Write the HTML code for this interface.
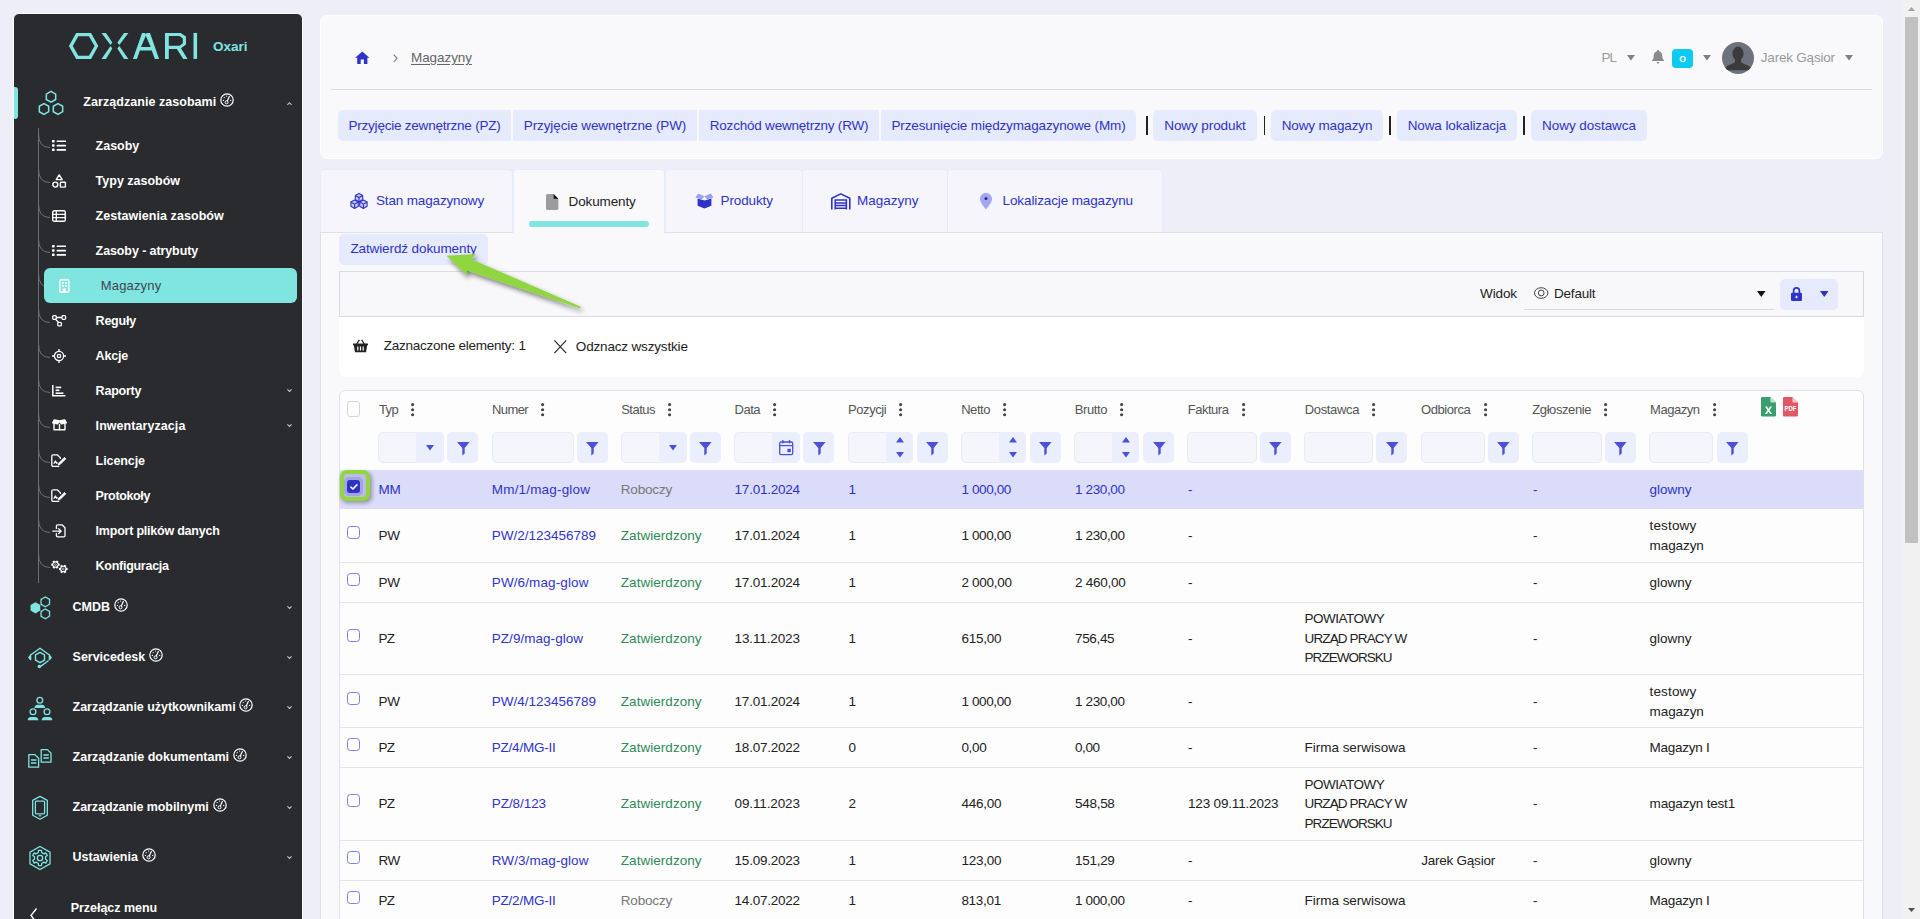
<!DOCTYPE html>
<html><head><meta charset="utf-8"><title>Magazyny</title>
<style>
html,body{margin:0;padding:0}
body{width:1920px;height:919px;overflow:hidden;position:relative;background:#eeeef8;font-family:"Liberation Sans",sans-serif;}
body div,body span,body svg{position:absolute;box-sizing:border-box;white-space:nowrap}
svg{overflow:visible}
</style></head><body>
<div style="left:13px;top:13px;width:290px;height:920px;background:#2a2b2e;border:1px solid #fff;border-radius:6px 6px 0 0;"></div>
<svg style="left:0;top:0" width="310" height="70" viewBox="0 0 310 70"><g fill="#80e5e0" fill-rule="evenodd"><path d="M68.9 46 L76.15 32.9 H91.05 L98.3 46 L91.05 59 H76.15 Z M72.8 46 L78.3 55.85 H88.9 L94.6 46 L88.9 36.2 H78.3 Z"/><path d="M101.5 32.9 H106 L112.3 42.5 L110.5 45.1 Z"/><path d="M101.5 59 H106 L112.3 48.4 L110.5 46 Z"/><path d="M128.4 32.9 H124 L117.4 42.5 L119.3 45.1 Z"/><path d="M128.4 59 H124 L117.4 48.4 L119.3 46 Z"/><path d="M142.05 32.95 H145 L145.8 34.3 L146.6 32.95 H150 L159.1 58.9 H154.9 L151.75 50.4 H139.9 L136.9 58.9 H132.95 Z M145.8 35.8 L150.7 47 H141 Z"/><path d="M165 32.95 H180.65 L186 36.5 V44.4 L181 48.2 L187.6 58.9 H183.2 L176.9 49 H168.8 V58.9 H165 Z M168.8 36.1 V45.8 H179.5 L182.8 43.2 V38.5 L179.5 36.1 Z"/><rect x="193.5" y="32.95" width="3.6" height="25.95"/></g></svg>
<span style="left:213px;top:38.7px;font-size:13.5px;line-height:16px;font-weight:700;color:#80e5e0;letter-spacing:-0.024px;">Oxari</span>
<div style="left:14px;top:87px;width:4px;height:32px;background:#80e5e0;border-radius:0 3px 3px 0;"></div>
<svg style="left:0px;top:0px;" width="80" height="130" viewBox="0 0 80 130"><polygon points="55.68,99.50 51.00,102.20 46.32,99.50 46.32,94.10 51.00,91.40 55.68,94.10" fill="none" stroke="#80e5e0" stroke-width="1.5"/><polygon points="48.68,111.70 44.00,114.40 39.32,111.70 39.32,106.30 44.00,103.60 48.68,106.30" fill="none" stroke="#80e5e0" stroke-width="1.5"/><polygon points="62.68,111.70 58.00,114.40 53.32,111.70 53.32,106.30 58.00,103.60 62.68,106.30" fill="none" stroke="#80e5e0" stroke-width="1.5"/></svg>
<span style="left:83.3px;top:94.0px;font-size:12.5px;line-height:16px;font-weight:700;color:#fff;letter-spacing:0.051px;">Zarządzanie zasobami</span>
<svg style="left:220px;top:93.3px;" width="14" height="14" viewBox="0 0 14 14"><circle cx="7" cy="7" r="6.2" fill="none" stroke="#fff" stroke-width="1.2"/><circle cx="6.6" cy="9.3" r="1.5" fill="none" stroke="#fff" stroke-width="1"/><path d="M7.3 8 L9.3 3.6" stroke="#fff" stroke-width="1.2" stroke-linecap="round"/><g fill="#fff"><circle cx="3.4" cy="7.4" r=".65"/><circle cx="4.2" cy="4.6" r=".65"/><circle cx="6.6" cy="3.1" r=".65"/><circle cx="10.7" cy="7.4" r=".65"/></g></svg>
<svg style="left:286.6px;top:101.8px;" width="5" height="3.2" viewBox="0 0 5 3.2"><path d="M.4 2.8 L2.5 .7 L4.6 2.8" fill="none" stroke="#c4c4c4" stroke-width="1.1"/></svg>
<div style="left:38px;top:128px;width:1px;height:455px;background:#6f6f72;"></div>
<svg style="left:38px;top:133.5px;" width="13" height="15" viewBox="0 0 13 15"><path d="M.5 0 Q.5 13.5 12 13.5" fill="none" stroke="#6f6f72" stroke-width="1"/></svg>
<span style="left:95.6px;top:138.3px;font-size:12.5px;line-height:16px;font-weight:700;color:#fff;letter-spacing:-0.010px;">Zasoby</span>
<svg style="left:52px;top:140.3px;" width="14" height="12" viewBox="0 0 14 12"><rect x="0" y="0" width="2.6" height="2.4" rx=".6" fill="#fff"/><rect x="4.6" y="0.4" width="9.4" height="1.7" rx=".5" fill="#fff"/><rect x="0" y="4.3" width="2.6" height="2.4" rx=".6" fill="#fff"/><rect x="4.6" y="4.7" width="9.4" height="1.7" rx=".5" fill="#fff"/><rect x="0" y="8.6" width="2.6" height="2.4" rx=".6" fill="#fff"/><rect x="4.6" y="9.0" width="9.4" height="1.7" rx=".5" fill="#fff"/></svg>
<svg style="left:38px;top:168.5px;" width="13" height="15" viewBox="0 0 13 15"><path d="M.5 0 Q.5 13.5 12 13.5" fill="none" stroke="#6f6f72" stroke-width="1"/></svg>
<span style="left:95.6px;top:173.3px;font-size:12.5px;line-height:16px;font-weight:700;color:#fff;letter-spacing:-0.000px;">Typy zasobów</span>
<svg style="left:52px;top:173.7px;" width="14" height="14" viewBox="0 0 14 14"><path d="M7.2 .9 L10.2 5.6 H4.2 Z" fill="none" stroke="#fff" stroke-width="1.4" stroke-linejoin="round"/><circle cx="3.3" cy="10.6" r="2.5" fill="none" stroke="#fff" stroke-width="1.4"/><rect x="8.4" y="8.2" width="5" height="4.9" rx=".6" fill="none" stroke="#fff" stroke-width="1.4"/></svg>
<svg style="left:38px;top:203.5px;" width="13" height="15" viewBox="0 0 13 15"><path d="M.5 0 Q.5 13.5 12 13.5" fill="none" stroke="#6f6f72" stroke-width="1"/></svg>
<span style="left:95.6px;top:208.3px;font-size:12.5px;line-height:16px;font-weight:700;color:#fff;letter-spacing:0.057px;">Zestawienia zasobów</span>
<svg style="left:52px;top:209.9px;" width="14" height="12" viewBox="0 0 14 12"><rect x=".7" y=".7" width="12.6" height="10.6" rx="1.6" fill="none" stroke="#fff" stroke-width="1.4"/><path d="M.7 4.3 H13.3 M.7 7.7 H13.3 M4.3 .7 V11.3" stroke="#fff" stroke-width="1.3" fill="none"/></svg>
<svg style="left:38px;top:238.5px;" width="13" height="15" viewBox="0 0 13 15"><path d="M.5 0 Q.5 13.5 12 13.5" fill="none" stroke="#6f6f72" stroke-width="1"/></svg>
<span style="left:95.6px;top:243.3px;font-size:12.5px;line-height:16px;font-weight:700;color:#fff;letter-spacing:-0.099px;">Zasoby - atrybuty</span>
<svg style="left:52px;top:245.3px;" width="14" height="12" viewBox="0 0 14 12"><rect x="0" y="0" width="2.6" height="2.4" rx=".6" fill="#fff"/><rect x="4.6" y="0.4" width="9.4" height="1.7" rx=".5" fill="#fff"/><rect x="0" y="4.3" width="2.6" height="2.4" rx=".6" fill="#fff"/><rect x="4.6" y="4.7" width="9.4" height="1.7" rx=".5" fill="#fff"/><rect x="0" y="8.6" width="2.6" height="2.4" rx=".6" fill="#fff"/><rect x="4.6" y="9.0" width="9.4" height="1.7" rx=".5" fill="#fff"/></svg>
<svg style="left:38px;top:273.5px;" width="13" height="15" viewBox="0 0 13 15"><path d="M.5 0 Q.5 13.5 12 13.5" fill="none" stroke="#6f6f72" stroke-width="1"/></svg>
<div style="left:44px;top:268px;width:253px;height:35px;background:#80e5e0;border-radius:6px;"></div>
<span style="left:100.8px;top:278.3px;font-size:13px;line-height:16px;color:#3f4652;letter-spacing:0.156px;">Magazyny</span>
<svg style="left:59.2px;top:278.5px;" width="11" height="14" viewBox="0 0 11 14"><rect x=".8" y=".8" width="9" height="12.4" rx="1.4" fill="none" stroke="#fff" stroke-width="1.5"/><g fill="#fff"><rect x="2.9" y="3" width="1.9" height="1.8"/><rect x="5.9" y="3" width="1.9" height="1.8"/><rect x="2.9" y="6" width="1.9" height="1.8"/><rect x="5.9" y="6" width="1.9" height="1.8"/><rect x="3.8" y="9.3" width="3" height="3.6"/></g></svg>
<svg style="left:38px;top:308.5px;" width="13" height="15" viewBox="0 0 13 15"><path d="M.5 0 Q.5 13.5 12 13.5" fill="none" stroke="#6f6f72" stroke-width="1"/></svg>
<span style="left:95.6px;top:313.3px;font-size:12.5px;line-height:16px;font-weight:700;color:#fff;letter-spacing:-0.229px;">Reguły</span>
<svg style="left:51.8px;top:314.5px;" width="15" height="12" viewBox="0 0 15 12"><g fill="none" stroke="#fff" stroke-width="1.3"><rect x=".7" y=".7" width="3.6" height="3.6" rx="1"/><rect x="10" y=".7" width="3.6" height="3.6" rx="1"/><rect x="5.8" y="7.3" width="3.6" height="3.6" rx="1"/><path d="M4.3 2.5 H10 M3.4 4 L6.6 7.6"/></g></svg>
<svg style="left:38px;top:343.5px;" width="13" height="15" viewBox="0 0 13 15"><path d="M.5 0 Q.5 13.5 12 13.5" fill="none" stroke="#6f6f72" stroke-width="1"/></svg>
<span style="left:95.6px;top:348.3px;font-size:12.5px;line-height:16px;font-weight:700;color:#fff;letter-spacing:-0.171px;">Akcje</span>
<svg style="left:52px;top:348.5px;" width="14" height="14" viewBox="0 0 14 14"><g fill="none" stroke="#fff" stroke-width="1.3"><circle cx="7" cy="7" r="4.6"/><circle cx="7" cy="7" r="1.7"/><path d="M7 0 V2.4 M7 11.6 V14 M0 7 H2.4 M11.6 7 H14"/></g></svg>
<svg style="left:38px;top:378.5px;" width="13" height="15" viewBox="0 0 13 15"><path d="M.5 0 Q.5 13.5 12 13.5" fill="none" stroke="#6f6f72" stroke-width="1"/></svg>
<span style="left:95.6px;top:383.3px;font-size:12.5px;line-height:16px;font-weight:700;color:#fff;letter-spacing:-0.218px;">Raporty</span>
<svg style="left:52.4px;top:384.5px;" width="14" height="12" viewBox="0 0 14 12"><path d="M.8 0 V10.8 H13.4" fill="none" stroke="#fff" stroke-width="1.5"/><g fill="#fff"><rect x="3.6" y="1.6" width="5.6" height="1.6"/><rect x="3.6" y="4.5" width="3.8" height="1.6"/><rect x="3.6" y="7.4" width="7.8" height="1.6"/></g></svg>
<svg style="left:286.6px;top:389.4px;" width="5" height="3.2" viewBox="0 0 5 3.2"><path d="M.4 .4 L2.5 2.5 L4.6 .4" fill="none" stroke="#c4c4c4" stroke-width="1.1"/></svg>
<svg style="left:38px;top:413.5px;" width="13" height="15" viewBox="0 0 13 15"><path d="M.5 0 Q.5 13.5 12 13.5" fill="none" stroke="#6f6f72" stroke-width="1"/></svg>
<span style="left:95.6px;top:418.3px;font-size:12.5px;line-height:16px;font-weight:700;color:#fff;letter-spacing:0.062px;">Inwentaryzacja</span>
<svg style="left:51.6px;top:419.3px;" width="15" height="12" viewBox="0 0 15 12"><g fill="none" stroke="#fff" stroke-width="1.4" stroke-linejoin="round"><path d="M2 4.6 V10.8 H13 V4.6"/><path d="M7.5 4.8 V10.8"/><path d="M.7 3.9 L2.3 .9 L7.5 1.9 L12.7 .9 L14.3 3.9 L9.6 4.9 L7.5 2.3 L5.4 4.9 Z" fill="#fff"/></g></svg>
<svg style="left:286.6px;top:424.4px;" width="5" height="3.2" viewBox="0 0 5 3.2"><path d="M.4 .4 L2.5 2.5 L4.6 .4" fill="none" stroke="#c4c4c4" stroke-width="1.1"/></svg>
<svg style="left:38px;top:448.5px;" width="13" height="15" viewBox="0 0 13 15"><path d="M.5 0 Q.5 13.5 12 13.5" fill="none" stroke="#6f6f72" stroke-width="1"/></svg>
<span style="left:95.6px;top:453.3px;font-size:12.5px;line-height:16px;font-weight:700;color:#fff;letter-spacing:-0.091px;">Licencje</span>
<svg style="left:51.4px;top:453.9px;" width="16" height="14" viewBox="0 0 16 14"><g fill="none" stroke="#fff" stroke-width="1.3" stroke-linejoin="round"><path d="M8.2 12.4 H2.2 Q.8 12.4 .8 11 V2.2 Q.8 .8 2.2 .8 H6.3 L9.4 3.9 V5"/><path d="M2.8 9.8 L4.4 7 L5.6 9.2 L6.6 8.4"/><path d="M13.4 3.4 L14.8 4.8 L9 10.6 L7.2 11 L7.6 9.2 Z" fill="#fff" stroke-width=".8"/></g></svg>
<svg style="left:38px;top:483.5px;" width="13" height="15" viewBox="0 0 13 15"><path d="M.5 0 Q.5 13.5 12 13.5" fill="none" stroke="#6f6f72" stroke-width="1"/></svg>
<span style="left:95.6px;top:488.3px;font-size:12.5px;line-height:16px;font-weight:700;color:#fff;letter-spacing:-0.350px;">Protokoły</span>
<svg style="left:51.4px;top:488.9px;" width="16" height="14" viewBox="0 0 16 14"><g fill="none" stroke="#fff" stroke-width="1.3" stroke-linejoin="round"><path d="M8.2 12.4 H2.2 Q.8 12.4 .8 11 V2.2 Q.8 .8 2.2 .8 H6.3 L9.4 3.9 V5"/><path d="M2.8 9.8 L4.4 7 L5.6 9.2 L6.6 8.4"/><path d="M13.4 3.4 L14.8 4.8 L9 10.6 L7.2 11 L7.6 9.2 Z" fill="#fff" stroke-width=".8"/></g></svg>
<svg style="left:38px;top:518.5px;" width="13" height="15" viewBox="0 0 13 15"><path d="M.5 0 Q.5 13.5 12 13.5" fill="none" stroke="#6f6f72" stroke-width="1"/></svg>
<span style="left:95.6px;top:523.3px;font-size:12.5px;line-height:16px;font-weight:700;color:#fff;letter-spacing:-0.224px;">Import plików danych</span>
<svg style="left:51.8px;top:523.9px;" width="14" height="14" viewBox="0 0 14 14"><g fill="none" stroke="#fff" stroke-width="1.3" stroke-linejoin="round" stroke-linecap="round"><path d="M4.4 4.6 V2.2 Q4.4 .8 5.8 .8 H10 L13 3.8 V11.4 Q13 12.8 11.6 12.8 H5.8 Q4.4 12.8 4.4 11.4 V9.6"/><path d="M.8 7.1 H9 M6.7 4.7 L9.2 7.1 L6.7 9.5"/></g></svg>
<svg style="left:38px;top:553.5px;" width="13" height="15" viewBox="0 0 13 15"><path d="M.5 0 Q.5 13.5 12 13.5" fill="none" stroke="#6f6f72" stroke-width="1"/></svg>
<span style="left:95.6px;top:558.3px;font-size:12.5px;line-height:16px;font-weight:700;color:#fff;letter-spacing:-0.275px;">Konfiguracja</span>
<svg style="left:50.6px;top:559.5px;" width="17" height="14" viewBox="0 0 17 14"><polygon points="7.59,3.44 8.79,3.64 8.79,5.56 7.59,5.76 7.05,6.69 7.48,7.84 5.82,8.80 5.04,7.86 3.96,7.86 3.18,8.80 1.52,7.84 1.95,6.69 1.41,5.76 0.21,5.56 0.21,3.64 1.41,3.44 1.95,2.51 1.52,1.36 3.18,0.40 3.96,1.34 5.04,1.34 5.82,0.40 7.48,1.36 7.05,2.51" fill="#fff"/><circle cx="4.5" cy="4.6" r="2.15" fill="#2a2b2e"/><circle cx="4.5" cy="4.6" r=".9" fill="none" stroke="#fff" stroke-width=".6"/><polygon points="15.39,7.84 16.59,8.04 16.59,9.96 15.39,10.16 14.85,11.09 15.28,12.24 13.62,13.20 12.84,12.26 11.76,12.26 10.98,13.20 9.32,12.24 9.75,11.09 9.21,10.16 8.01,9.96 8.01,8.04 9.21,7.84 9.75,6.91 9.32,5.76 10.98,4.80 11.76,5.74 12.84,5.74 13.62,4.80 15.28,5.76 14.85,6.91" fill="#fff"/><circle cx="12.3" cy="9.0" r="2.15" fill="#2a2b2e"/><circle cx="12.3" cy="9.0" r=".9" fill="none" stroke="#fff" stroke-width=".6"/></svg>
<span style="left:72.6px;top:598.8px;font-size:12.5px;line-height:16px;font-weight:700;color:#fff;letter-spacing:-0.049px;">CMDB</span>
<svg style="left:113.7px;top:598.0999999999999px;" width="14" height="14" viewBox="0 0 14 14"><circle cx="7" cy="7" r="6.2" fill="none" stroke="#fff" stroke-width="1.2"/><circle cx="6.6" cy="9.3" r="1.5" fill="none" stroke="#fff" stroke-width="1"/><path d="M7.3 8 L9.3 3.6" stroke="#fff" stroke-width="1.2" stroke-linecap="round"/><g fill="#fff"><circle cx="3.4" cy="7.4" r=".65"/><circle cx="4.2" cy="4.6" r=".65"/><circle cx="6.6" cy="3.1" r=".65"/><circle cx="10.7" cy="7.4" r=".65"/></g></svg>
<svg style="left:286.6px;top:605.9px;" width="5" height="3.2" viewBox="0 0 5 3.2"><path d="M.4 .4 L2.5 2.5 L4.6 .4" fill="none" stroke="#c4c4c4" stroke-width="1.1"/></svg>
<span style="left:72.6px;top:648.9px;font-size:12.5px;line-height:16px;font-weight:700;color:#fff;letter-spacing:-0.034px;">Servicedesk</span>
<svg style="left:149.2px;top:648.1999999999999px;" width="14" height="14" viewBox="0 0 14 14"><circle cx="7" cy="7" r="6.2" fill="none" stroke="#fff" stroke-width="1.2"/><circle cx="6.6" cy="9.3" r="1.5" fill="none" stroke="#fff" stroke-width="1"/><path d="M7.3 8 L9.3 3.6" stroke="#fff" stroke-width="1.2" stroke-linecap="round"/><g fill="#fff"><circle cx="3.4" cy="7.4" r=".65"/><circle cx="4.2" cy="4.6" r=".65"/><circle cx="6.6" cy="3.1" r=".65"/><circle cx="10.7" cy="7.4" r=".65"/></g></svg>
<svg style="left:286.6px;top:656.0px;" width="5" height="3.2" viewBox="0 0 5 3.2"><path d="M.4 .4 L2.5 2.5 L4.6 .4" fill="none" stroke="#c4c4c4" stroke-width="1.1"/></svg>
<span style="left:72.6px;top:698.9px;font-size:12.5px;line-height:16px;font-weight:700;color:#fff;letter-spacing:-0.037px;">Zarządzanie użytkownikami</span>
<svg style="left:239.4px;top:698.1999999999999px;" width="14" height="14" viewBox="0 0 14 14"><circle cx="7" cy="7" r="6.2" fill="none" stroke="#fff" stroke-width="1.2"/><circle cx="6.6" cy="9.3" r="1.5" fill="none" stroke="#fff" stroke-width="1"/><path d="M7.3 8 L9.3 3.6" stroke="#fff" stroke-width="1.2" stroke-linecap="round"/><g fill="#fff"><circle cx="3.4" cy="7.4" r=".65"/><circle cx="4.2" cy="4.6" r=".65"/><circle cx="6.6" cy="3.1" r=".65"/><circle cx="10.7" cy="7.4" r=".65"/></g></svg>
<svg style="left:286.6px;top:706.0px;" width="5" height="3.2" viewBox="0 0 5 3.2"><path d="M.4 .4 L2.5 2.5 L4.6 .4" fill="none" stroke="#c4c4c4" stroke-width="1.1"/></svg>
<span style="left:72.6px;top:748.9px;font-size:12.5px;line-height:16px;font-weight:700;color:#fff;letter-spacing:0.009px;">Zarządzanie dokumentami</span>
<svg style="left:233px;top:748.1999999999999px;" width="14" height="14" viewBox="0 0 14 14"><circle cx="7" cy="7" r="6.2" fill="none" stroke="#fff" stroke-width="1.2"/><circle cx="6.6" cy="9.3" r="1.5" fill="none" stroke="#fff" stroke-width="1"/><path d="M7.3 8 L9.3 3.6" stroke="#fff" stroke-width="1.2" stroke-linecap="round"/><g fill="#fff"><circle cx="3.4" cy="7.4" r=".65"/><circle cx="4.2" cy="4.6" r=".65"/><circle cx="6.6" cy="3.1" r=".65"/><circle cx="10.7" cy="7.4" r=".65"/></g></svg>
<svg style="left:286.6px;top:756.0px;" width="5" height="3.2" viewBox="0 0 5 3.2"><path d="M.4 .4 L2.5 2.5 L4.6 .4" fill="none" stroke="#c4c4c4" stroke-width="1.1"/></svg>
<span style="left:72.6px;top:798.9px;font-size:12.5px;line-height:16px;font-weight:700;color:#fff;letter-spacing:-0.073px;">Zarządzanie mobilnymi</span>
<svg style="left:212.6px;top:798.1999999999999px;" width="14" height="14" viewBox="0 0 14 14"><circle cx="7" cy="7" r="6.2" fill="none" stroke="#fff" stroke-width="1.2"/><circle cx="6.6" cy="9.3" r="1.5" fill="none" stroke="#fff" stroke-width="1"/><path d="M7.3 8 L9.3 3.6" stroke="#fff" stroke-width="1.2" stroke-linecap="round"/><g fill="#fff"><circle cx="3.4" cy="7.4" r=".65"/><circle cx="4.2" cy="4.6" r=".65"/><circle cx="6.6" cy="3.1" r=".65"/><circle cx="10.7" cy="7.4" r=".65"/></g></svg>
<svg style="left:286.6px;top:806.0px;" width="5" height="3.2" viewBox="0 0 5 3.2"><path d="M.4 .4 L2.5 2.5 L4.6 .4" fill="none" stroke="#c4c4c4" stroke-width="1.1"/></svg>
<span style="left:72.6px;top:848.9px;font-size:12.5px;line-height:16px;font-weight:700;color:#fff;letter-spacing:-0.000px;">Ustawienia</span>
<svg style="left:141.8px;top:848.1999999999999px;" width="14" height="14" viewBox="0 0 14 14"><circle cx="7" cy="7" r="6.2" fill="none" stroke="#fff" stroke-width="1.2"/><circle cx="6.6" cy="9.3" r="1.5" fill="none" stroke="#fff" stroke-width="1"/><path d="M7.3 8 L9.3 3.6" stroke="#fff" stroke-width="1.2" stroke-linecap="round"/><g fill="#fff"><circle cx="3.4" cy="7.4" r=".65"/><circle cx="4.2" cy="4.6" r=".65"/><circle cx="6.6" cy="3.1" r=".65"/><circle cx="10.7" cy="7.4" r=".65"/></g></svg>
<svg style="left:286.6px;top:856.0px;" width="5" height="3.2" viewBox="0 0 5 3.2"><path d="M.4 .4 L2.5 2.5 L4.6 .4" fill="none" stroke="#c4c4c4" stroke-width="1.1"/></svg>
<svg style="left:0px;top:0px;" width="70" height="919" viewBox="0 0 70 919"><polygon points="40.25,610.60 35.40,613.40 30.55,610.60 30.55,605.00 35.40,602.20 40.25,605.00" fill="#80e5e0"/><polygon points="49.54,604.25 45.30,606.70 41.06,604.25 41.06,599.35 45.30,596.90 49.54,599.35" fill="none" stroke="#80e5e0" stroke-width="1.3"/><polygon points="49.54,616.25 45.30,618.70 41.06,616.25 41.06,611.35 45.30,608.90 49.54,611.35" fill="none" stroke="#80e5e0" stroke-width="1.3"/></svg>
<svg style="left:0px;top:0px;" width="70" height="919" viewBox="0 0 70 919"><polygon points="44.50,660.10 40.00,662.70 35.50,660.10 35.50,654.90 40.00,652.30 44.50,654.90" fill="none" stroke="#80e5e0" stroke-width="1.4"/><path d="M30.6 660.0 V655.0 L40 648.2 L49.4 655.0 V660.0" fill="none" stroke="#80e5e0" stroke-width="1.4" stroke-linejoin="round"/><path d="M30.6 654.3 L28 657.5 L30.6 660.7 Z M49.4 654.3 L52 657.5 L49.4 660.7 Z" fill="#80e5e0"/><path d="M48.6 660.5 L41 666.1" stroke="#80e5e0" stroke-width="1.4" fill="none"/><circle cx="39.4" cy="666.5" r="1.8" fill="#80e5e0"/></svg>
<svg style="left:0px;top:0px;" width="70" height="919" viewBox="0 0 70 919"><circle cx="39.8" cy="700.3" r="2.9" fill="none" stroke="#80e5e0" stroke-width="1.3"/><path d="M34.5 707.9999999999999 Q34.8 704.6999999999999 37.8 704.6999999999999 H41.8 Q44.8 704.6999999999999 45.099999999999994 707.9999999999999 Z" fill="#80e5e0"/><circle cx="33" cy="711.7" r="2.9" fill="none" stroke="#80e5e0" stroke-width="1.3"/><path d="M27.7 720.2 Q28 716.9000000000001 31 716.9000000000001 H35 Q38 716.9000000000001 38.3 720.2 Z" fill="#80e5e0"/><circle cx="47" cy="711.7" r="2.9" fill="none" stroke="#80e5e0" stroke-width="1.3"/><path d="M41.7 720.2 Q42 716.9000000000001 45 716.9000000000001 H49 Q52 716.9000000000001 52.3 720.2 Z" fill="#80e5e0"/></svg>
<svg style="left:0px;top:0px;" width="70" height="919" viewBox="0 0 70 919"><g fill="none" stroke="#80e5e0" stroke-width="1.3" stroke-linejoin="round"><path d="M41.2 749.6 H47.4 L51 753.2 V762.2 H41.2 Z"/><path d="M43.4 755 H48.8 M43.4 758 H48.8"/><path d="M28.8 754.6 H35 L38.6 758.2 V767.2 H28.8 Z"/><path d="M31 760 H36.4 M31 763 H36.4"/></g></svg>
<svg style="left:0px;top:0px;" width="70" height="919" viewBox="0 0 70 919"><path d="M40 796.4 L47.3 800.4 V815.1999999999999 L40 819.1999999999999 L32.7 815.1999999999999 V800.4 Z" fill="none" stroke="#80e5e0" stroke-width="1.3" stroke-linejoin="round"/><rect x="35.4" y="801.1999999999999" width="9.2" height="12.6" rx="1" fill="none" stroke="#80e5e0" stroke-width="1.3"/><rect x="38.8" y="815.1999999999999" width="2.4" height="1.2" fill="#80e5e0"/></svg>
<svg style="left:0px;top:0px;" width="70" height="919" viewBox="0 0 70 919"><polygon points="40,846.5 50,852.2 50,863.8 40,869.5 30,863.8 30,852.2" fill="none" stroke="#80e5e0" stroke-width="1.3"/><circle cx="40" cy="858" r="2.7" fill="none" stroke="#80e5e0" stroke-width="1.3"/><polygon points="38.32,852.55 38.47,850.45 41.53,850.45 41.68,852.55 43.87,853.82 45.77,852.90 47.30,855.55 45.56,856.74 45.56,859.26 47.30,860.45 45.77,863.10 43.87,862.18 41.68,863.45 41.53,865.55 38.47,865.55 38.32,863.45 36.13,862.18 34.23,863.10 32.70,860.45 34.44,859.26 34.44,856.74 32.70,855.55 34.23,852.90 36.13,853.82" fill="none" stroke="#80e5e0" stroke-width="1.3" stroke-linejoin="round"/></svg>
<span style="left:70.7px;top:900.3px;font-size:12.5px;line-height:16px;font-weight:700;color:#fff;letter-spacing:-0.034px;">Przełącz menu</span>
<svg style="left:29px;top:906px;" width="10" height="16" viewBox="0 0 10 16"><path d="M7.5 2.5 L2 9.5 L7.5 16.5" fill="none" stroke="#fff" stroke-width="1.4"/></svg>
<div style="left:320px;top:15px;width:1563px;height:144px;background:#f9f9fc;border-radius:7px;border:1px solid #fff;"></div>
<svg style="left:355px;top:51px;" width="15" height="14" viewBox="0 0 15 14"><path d="M7.3 .4 L14.4 6.7 H12.4 V13 H8.9 V8.6 H5.7 V13 H2.2 V6.7 H.2 Z" fill="#2e33c6"/></svg>
<svg style="left:392.6px;top:54px;" width="5" height="9" viewBox="0 0 5 9"><path d="M.7 .6 L4 4.3 L.7 8" fill="none" stroke="#777" stroke-width="1.1"/></svg>
<span style="left:411px;top:49.7px;font-size:13.5px;line-height:16px;color:#666;letter-spacing:-0.066px;text-decoration:underline;text-underline-offset:1.5px;">Magazyny</span>
<div style="left:331px;top:89px;width:1541px;height:1px;background:#dcdde3;"></div>
<span style="left:1601.6px;top:50.0px;font-size:13.5px;line-height:16px;color:#999;letter-spacing:-1.156px;">PL</span>
<svg style="left:1627px;top:55px;" width="8" height="5.6" viewBox="0 0 8 5.6"><path d="M0 0 H8 L4.0 5.6 Z" fill="#808080"/></svg>
<svg style="left:1651.6px;top:50.4px;" width="12" height="14" viewBox="0 0 12 14"><path d="M6 0 C6.7 0 7.1 .5 7.1 1.2 C9.3 1.8 10.3 3.6 10.3 6 C10.3 8.4 11 9.3 12 10.3 V11 H0 V10.3 C1 9.3 1.7 8.4 1.7 6 C1.7 3.6 2.7 1.8 4.9 1.2 C4.9 .5 5.3 0 6 0 Z M4.6 11.9 H7.4 C7.4 12.8 6.8 13.4 6 13.4 C5.2 13.4 4.6 12.8 4.6 11.9 Z" fill="#8b8b8b"/></svg>
<div style="left:1672px;top:49px;width:21px;height:19px;background:#0dcaf0;border-radius:4px;"></div>
<span style="left:1679.2px;top:51.3px;font-size:8.6px;line-height:16px;font-weight:700;color:#fff;">O</span>
<svg style="left:1703px;top:55px;" width="8" height="5.6" viewBox="0 0 8 5.6"><path d="M0 0 H8 L4.0 5.6 Z" fill="#808080"/></svg>
<svg style="left:1722px;top:41.6px" width="32" height="32" viewBox="0 0 32 32"><defs><clipPath id="av"><circle cx="16" cy="16" r="16"/></clipPath></defs><circle cx="16" cy="16" r="16" fill="#6c737e"/><g clip-path="url(#av)" fill="#3b3b3b"><clipPath id="av2"><rect x="0" y="0" width="32" height="28.2"/></clipPath><g clip-path="url(#av2)"><ellipse cx="16" cy="11.6" rx="5.6" ry="7"/><path d="M13 15 H19 V20 C19 21.5 28 22.5 29.5 27 V32 H2.5 V27 C4 22.5 13 21.5 13 20 Z"/></g></g></svg>
<span style="left:1760.8px;top:50.0px;font-size:13.5px;line-height:16px;color:#999;letter-spacing:-0.210px;">Jarek Gąsior</span>
<svg style="left:1845px;top:55px;" width="8" height="5.6" viewBox="0 0 8 5.6"><path d="M0 0 H8 L4.0 5.6 Z" fill="#808080"/></svg>
<div style="left:338px;top:110px;width:173px;height:31px;background:#e6eafd;border-radius:5px 0 0 5px;"></div>
<span style="left:348.5px;top:118.1px;font-size:13.5px;line-height:16px;color:#2e33c6;letter-spacing:-0.222px;">Przyjęcie zewnętrzne (PZ)</span>
<div style="left:513px;top:110px;width:184px;height:31px;background:#e6eafd;border-radius:0;"></div>
<span style="left:523.75px;top:118.1px;font-size:13.5px;line-height:16px;color:#2e33c6;letter-spacing:-0.102px;">Przyjęcie wewnętrzne (PW)</span>
<div style="left:699px;top:110px;width:180px;height:31px;background:#e6eafd;border-radius:0;"></div>
<span style="left:709.75px;top:118.1px;font-size:13.5px;line-height:16px;color:#2e33c6;letter-spacing:-0.209px;">Rozchód wewnętrzny (RW)</span>
<div style="left:881px;top:110px;width:255px;height:31px;background:#e6eafd;border-radius:0 5px 5px 0;"></div>
<span style="left:891.5px;top:118.1px;font-size:13.5px;line-height:16px;color:#2e33c6;letter-spacing:-0.135px;">Przesunięcie międzymagazynowe (Mm)</span>
<div style="left:1153px;top:110px;width:104px;height:31px;background:#e6eafd;border-radius:5px;"></div>
<span style="left:1164.25px;top:118.1px;font-size:13.5px;line-height:16px;color:#2e33c6;letter-spacing:-0.086px;">Nowy produkt</span>
<div style="left:1271px;top:110px;width:112px;height:31px;background:#e6eafd;border-radius:5px;"></div>
<span style="left:1281.75px;top:118.1px;font-size:13.5px;line-height:16px;color:#2e33c6;letter-spacing:-0.149px;">Nowy magazyn</span>
<div style="left:1397px;top:110px;width:120px;height:31px;background:#e6eafd;border-radius:5px;"></div>
<span style="left:1407.75px;top:118.1px;font-size:13.5px;line-height:16px;color:#2e33c6;letter-spacing:-0.128px;">Nowa lokalizacja</span>
<div style="left:1531px;top:110px;width:116px;height:31px;background:#e6eafd;border-radius:5px;"></div>
<span style="left:1542.0px;top:118.1px;font-size:13.5px;line-height:16px;color:#2e33c6;letter-spacing:-0.042px;">Nowy dostawca</span>
<div style="left:1146px;top:116px;width:1.5px;height:18.5px;background:#222;"></div>
<div style="left:1263.5px;top:116px;width:1.5px;height:18.5px;background:#222;"></div>
<div style="left:1389px;top:116px;width:1.5px;height:18.5px;background:#222;"></div>
<div style="left:1523px;top:116px;width:1.5px;height:18.5px;background:#222;"></div>
<div style="left:320px;top:232px;width:1563px;height:700px;background:#f9f9fc;border:1px solid #dee2e6;"></div>
<div style="left:320px;top:169px;width:193px;height:63px;background:#f5f5fb;border-radius:4px 4px 0 0;border:1px solid #e7ebfc;border-bottom:none;"></div>
<div style="left:513px;top:169px;width:152px;height:64.5px;background:#f9f9fc;border-radius:4px 4px 0 0;border:1px solid #e7ebfc;border-bottom:none;"></div>
<div style="left:665px;top:169px;width:137.5px;height:63px;background:#f5f5fb;border-radius:4px 4px 0 0;border:1px solid #e7ebfc;border-bottom:none;"></div>
<div style="left:802px;top:169px;width:145.5px;height:63px;background:#f5f5fb;border-radius:4px 4px 0 0;border:1px solid #e7ebfc;border-bottom:none;"></div>
<div style="left:947px;top:169px;width:215.6px;height:63px;background:#f5f5fb;border-radius:4px 4px 0 0;border:1px solid #e7ebfc;border-bottom:none;"></div>
<div style="left:529px;top:221px;width:120px;height:6px;background:#80e5e0;border-radius:3px;"></div>
<svg style="left:350px;top:193px;" width="18" height="16" viewBox="0 0 18 16"><path d="M9 0.39999999999999947 L12.7 2.4999999999999996 V6.699999999999999 L9 8.8 L5.3 6.699999999999999 V2.4999999999999996 Z" fill="#c9cbf6" stroke="#2e33c6" stroke-width="1.1" stroke-linejoin="round"/><path d="M5.3 2.4999999999999996 L9 4.6 L12.7 2.4999999999999996 M9 4.6 V8.8" fill="none" stroke="#2e33c6" stroke-width="1.1"/><path d="M4.6 6.999999999999999 L8.3 9.1 V13.299999999999999 L4.6 15.399999999999999 L0.8999999999999995 13.299999999999999 V9.1 Z" fill="#c9cbf6" stroke="#2e33c6" stroke-width="1.1" stroke-linejoin="round"/><path d="M0.8999999999999995 9.1 L4.6 11.2 L8.3 9.1 M4.6 11.2 V15.399999999999999" fill="none" stroke="#2e33c6" stroke-width="1.1"/><path d="M13.4 6.999999999999999 L17.1 9.1 V13.299999999999999 L13.4 15.399999999999999 L9.7 13.299999999999999 V9.1 Z" fill="#c9cbf6" stroke="#2e33c6" stroke-width="1.1" stroke-linejoin="round"/><path d="M9.7 9.1 L13.4 11.2 L17.1 9.1 M13.4 11.2 V15.399999999999999" fill="none" stroke="#2e33c6" stroke-width="1.1"/></svg>
<span style="left:376px;top:193.1px;font-size:13.5px;line-height:16px;color:#2e33c6;letter-spacing:-0.154px;">Stan magazynowy</span>
<svg style="left:545.6px;top:194px;" width="12.4" height="16" viewBox="0 0 12.4 16"><path d="M1.6 0 H7.6 L12.4 4.8 V14.4 Q12.4 16 10.8 16 H1.6 Q0 16 0 14.4 V1.6 Q0 0 1.6 0 Z" fill="#9c9c9c"/><path d="M7.6 0 L12.4 4.8 H7.6 Z" fill="#111"/></svg>
<span style="left:568.6px;top:193.9px;font-size:13.5px;line-height:16px;color:#222;letter-spacing:-0.142px;">Dokumenty</span>
<svg style="left:694.5px;top:193.4px;" width="19" height="16" viewBox="0 0 19 16"><path d="M2.6 5.4 L9.5 7.6 L16.4 5.4 V12.8 L9.5 15.6 L2.6 12.8 Z" fill="#2e33c6"/><path d="M3.2 .6 L9.5 3.2 L15.8 .6 L18.6 4.4 L12.4 6.6 L9.5 3.6 L6.6 6.6 L.4 4.4 Z" fill="#9ea2ee"/></svg>
<span style="left:720.6px;top:193.1px;font-size:13.5px;line-height:16px;color:#2e33c6;letter-spacing:-0.134px;">Produkty</span>
<svg style="left:830.6px;top:192.6px;" width="19.6" height="16.6" viewBox="0 0 19.6 16.6"><path d="M.8 16.4 V5.2 L9.8 .9 L18.8 5.2 V16.4" fill="none" stroke="#2e33c6" stroke-width="1.6" stroke-linejoin="round"/><path d="M4.2 16.4 V7 H15.4 V16.4" fill="none" stroke="#2e33c6" stroke-width="1.5"/><path d="M4.2 9.9 H15.4 M4.2 12.6 H15.4 M4.2 15.3 H15.4" fill="none" stroke="#2e33c6" stroke-width="1.5"/></svg>
<span style="left:857px;top:193.1px;font-size:13.5px;line-height:16px;color:#2e33c6;letter-spacing:-0.004px;">Magazyny</span>
<svg style="left:979.6px;top:192.6px;" width="12" height="17" viewBox="0 0 12 17"><path d="M6 0 C9.3 0 12 2.6 12 5.9 C12 9.6 8 13.4 6 16.6 C4 13.4 0 9.6 0 5.9 C0 2.6 2.7 0 6 0 Z" fill="#a3a6ee"/><circle cx="6" cy="5.6" r="1.5" fill="#23279e"/></svg>
<span style="left:1002.6px;top:193.1px;font-size:13.5px;line-height:16px;color:#2e33c6;letter-spacing:-0.121px;">Lokalizacje magazynu</span>
<div style="left:339px;top:233.6px;width:149px;height:31px;background:#e6eafd;border-radius:5px;"></div>
<span style="left:350.4px;top:241.1px;font-size:13.5px;line-height:16px;color:#2e33c6;letter-spacing:-0.105px;">Zatwierdź dokumenty</span>
<div style="left:339px;top:271px;width:1525px;height:46px;background:#f8f8fb;border:1px solid #dadbe2;"></div>
<span style="left:1480px;top:286.1px;font-size:13.5px;line-height:16px;color:#222;letter-spacing:-0.101px;">Widok</span>
<div style="left:1524px;top:309px;width:250px;height:1px;background:#d9dae0;"></div>
<svg style="left:1533.6px;top:287.2px;" width="14.4" height="12" viewBox="0 0 14.4 12"><ellipse cx="7.2" cy="6" rx="6.7" ry="5.3" fill="none" stroke="#444" stroke-width="1"/><circle cx="7.2" cy="6" r="2.9" fill="none" stroke="#444" stroke-width="1"/></svg>
<span style="left:1554px;top:286.1px;font-size:13.5px;line-height:16px;color:#222;letter-spacing:-0.211px;">Default</span>
<svg style="left:1757px;top:291px;" width="8.5" height="6" viewBox="0 0 8.5 6"><path d="M0 0 H8.5 L4.25 6 Z" fill="#111"/></svg>
<div style="left:1780px;top:279.4px;width:58.4px;height:30.6px;background:#e6eafd;border-radius:5px;"></div>
<svg style="left:1790.6px;top:287px;" width="11" height="14" viewBox="0 0 11 14"><path d="M2.6 6 V4 C2.6 1.8 3.8 .8 5.5 .8 C7.2 .8 8.4 1.8 8.4 4 V6" fill="none" stroke="#2e33c6" stroke-width="1.7"/><rect x="0" y="5.8" width="11" height="8.2" rx="1.3" fill="#2e33c6"/><rect x="4.6" y="8.8" width="1.8" height="2.4" fill="#e6eafd"/></svg>
<svg style="left:1820px;top:291px;" width="8.5" height="6" viewBox="0 0 8.5 6"><path d="M0 0 H8.5 L4.25 6 Z" fill="#2e33c6"/></svg>
<div style="left:339px;top:317px;width:1525px;height:60px;background:#fff;border-radius:0 0 6px 6px;"></div>
<svg style="left:353px;top:339px;" width="15" height="13.6" viewBox="0 0 15 13.6"><path d="M0 4.6 H15 V6.2 H14.2 L13 13.2 H2 L.8 6.2 H0 Z M4.2 7.6 V11.6 H5.4 V7.6 Z M6.9 7.6 V11.6 H8.1 V7.6 Z M9.6 7.6 V11.6 H10.8 V7.6 Z" fill="#222" fill-rule="evenodd"/><path d="M3.6 5 L6.4 .8 M11.4 5 L8.6 .8" stroke="#222" stroke-width="1.3" fill="none"/></svg>
<span style="left:383.7px;top:338.1px;font-size:13.5px;line-height:16px;color:#222;letter-spacing:-0.231px;">Zaznaczone elementy: 1</span>
<svg style="left:554.4px;top:340.2px;" width="12.6" height="13.6" viewBox="0 0 12.6 13.6"><path d="M.4 .4 L12.2 13.2 M12.2 .4 L.4 13.2" stroke="#222" stroke-width="1.1" fill="none"/></svg>
<span style="left:575.8px;top:338.9px;font-size:13.5px;line-height:16px;color:#222;letter-spacing:-0.164px;">Odznacz wszystkie</span>
<svg style="left:430px;top:235px" width="180" height="95" viewBox="430 235 180 95"><defs><filter id="sh" x="-20%" y="-20%" width="150%" height="160%"><feGaussianBlur in="SourceAlpha" stdDeviation="2.5"/><feOffset dx="2" dy="2.5"/><feComponentTransfer><feFuncA type="linear" slope=".5"/></feComponentTransfer><feMerge><feMergeNode/><feMergeNode in="SourceGraphic"/></feMerge></filter></defs><polygon filter="url(#sh)" points="446.6,255.8 476,254.1 471.3,259.2 580.3,306.5 580.6,307.4 579.6,308.3 467,270.6 467,275.8" fill="#8fd63f"/></svg>
<div style="left:339px;top:390px;width:1525px;height:540px;background:#fdfdfe;border:1px solid #dee2e6;border-radius:6px 6px 0 0;"></div>
<div style="left:347px;top:401.2px;width:13px;height:15.6px;background:#fff;border:1px solid #d4d4da;border-radius:3px;"></div>
<span style="left:379px;top:402.1px;font-size:13px;line-height:16px;color:#555;letter-spacing:-0.651px;">Typ</span>
<svg style="left:410.7px;top:403px;" width="3.2" height="13.4" viewBox="0 0 3.2 13.4"><circle cx="1.6" cy="1.6" r="1.55" fill="#444"/><circle cx="1.6" cy="6.7" r="1.55" fill="#444"/><circle cx="1.6" cy="11.8" r="1.55" fill="#444"/></svg>
<span style="left:492px;top:402.1px;font-size:13px;line-height:16px;color:#555;letter-spacing:-0.601px;">Numer</span>
<svg style="left:540.6999999999999px;top:403px;" width="3.2" height="13.4" viewBox="0 0 3.2 13.4"><circle cx="1.6" cy="1.6" r="1.55" fill="#444"/><circle cx="1.6" cy="6.7" r="1.55" fill="#444"/><circle cx="1.6" cy="11.8" r="1.55" fill="#444"/></svg>
<span style="left:621.2px;top:402.1px;font-size:13px;line-height:16px;color:#555;letter-spacing:-0.509px;">Status</span>
<svg style="left:667.8px;top:403px;" width="3.2" height="13.4" viewBox="0 0 3.2 13.4"><circle cx="1.6" cy="1.6" r="1.55" fill="#444"/><circle cx="1.6" cy="6.7" r="1.55" fill="#444"/><circle cx="1.6" cy="11.8" r="1.55" fill="#444"/></svg>
<span style="left:734.6px;top:402.1px;font-size:13px;line-height:16px;color:#555;letter-spacing:-0.515px;">Data</span>
<svg style="left:773.0px;top:403px;" width="3.2" height="13.4" viewBox="0 0 3.2 13.4"><circle cx="1.6" cy="1.6" r="1.55" fill="#444"/><circle cx="1.6" cy="6.7" r="1.55" fill="#444"/><circle cx="1.6" cy="11.8" r="1.55" fill="#444"/></svg>
<span style="left:848px;top:402.1px;font-size:13px;line-height:16px;color:#555;letter-spacing:-0.425px;">Pozycji</span>
<svg style="left:898.8px;top:403px;" width="3.2" height="13.4" viewBox="0 0 3.2 13.4"><circle cx="1.6" cy="1.6" r="1.55" fill="#444"/><circle cx="1.6" cy="6.7" r="1.55" fill="#444"/><circle cx="1.6" cy="11.8" r="1.55" fill="#444"/></svg>
<span style="left:961.2px;top:402.1px;font-size:13px;line-height:16px;color:#555;letter-spacing:-0.454px;">Netto</span>
<svg style="left:1002.8px;top:403px;" width="3.2" height="13.4" viewBox="0 0 3.2 13.4"><circle cx="1.6" cy="1.6" r="1.55" fill="#444"/><circle cx="1.6" cy="6.7" r="1.55" fill="#444"/><circle cx="1.6" cy="11.8" r="1.55" fill="#444"/></svg>
<span style="left:1074.8px;top:402.1px;font-size:13px;line-height:16px;color:#555;letter-spacing:-0.414px;">Brutto</span>
<svg style="left:1119.9px;top:403px;" width="3.2" height="13.4" viewBox="0 0 3.2 13.4"><circle cx="1.6" cy="1.6" r="1.55" fill="#444"/><circle cx="1.6" cy="6.7" r="1.55" fill="#444"/><circle cx="1.6" cy="11.8" r="1.55" fill="#444"/></svg>
<span style="left:1187.7px;top:402.1px;font-size:13px;line-height:16px;color:#555;letter-spacing:-0.467px;">Faktura</span>
<svg style="left:1241.9px;top:403px;" width="3.2" height="13.4" viewBox="0 0 3.2 13.4"><circle cx="1.6" cy="1.6" r="1.55" fill="#444"/><circle cx="1.6" cy="6.7" r="1.55" fill="#444"/><circle cx="1.6" cy="11.8" r="1.55" fill="#444"/></svg>
<span style="left:1304.8px;top:402.1px;font-size:13px;line-height:16px;color:#555;letter-spacing:-0.360px;">Dostawca</span>
<svg style="left:1371.7px;top:403px;" width="3.2" height="13.4" viewBox="0 0 3.2 13.4"><circle cx="1.6" cy="1.6" r="1.55" fill="#444"/><circle cx="1.6" cy="6.7" r="1.55" fill="#444"/><circle cx="1.6" cy="11.8" r="1.55" fill="#444"/></svg>
<span style="left:1421px;top:402.1px;font-size:13px;line-height:16px;color:#555;letter-spacing:-0.419px;">Odbiorca</span>
<svg style="left:1483.8000000000002px;top:403px;" width="3.2" height="13.4" viewBox="0 0 3.2 13.4"><circle cx="1.6" cy="1.6" r="1.55" fill="#444"/><circle cx="1.6" cy="6.7" r="1.55" fill="#444"/><circle cx="1.6" cy="11.8" r="1.55" fill="#444"/></svg>
<span style="left:1532.3px;top:402.1px;font-size:13px;line-height:16px;color:#555;letter-spacing:-0.417px;">Zgłoszenie</span>
<svg style="left:1603.8000000000002px;top:403px;" width="3.2" height="13.4" viewBox="0 0 3.2 13.4"><circle cx="1.6" cy="1.6" r="1.55" fill="#444"/><circle cx="1.6" cy="6.7" r="1.55" fill="#444"/><circle cx="1.6" cy="11.8" r="1.55" fill="#444"/></svg>
<span style="left:1650px;top:402.1px;font-size:13px;line-height:16px;color:#555;letter-spacing:-0.450px;">Magazyn</span>
<svg style="left:1712.8000000000002px;top:403px;" width="3.2" height="13.4" viewBox="0 0 3.2 13.4"><circle cx="1.6" cy="1.6" r="1.55" fill="#444"/><circle cx="1.6" cy="6.7" r="1.55" fill="#444"/><circle cx="1.6" cy="11.8" r="1.55" fill="#444"/></svg>
<svg style="left:1761px;top:397px;" width="15" height="19.4" viewBox="0 0 15 19.4"><path d="M1.2 0 H9.4 L15 5.6 V18.2 Q15 19.4 13.8 19.4 H1.2 Q0 19.4 0 18.2 V1.2 Q0 0 1.2 0 Z" fill="#3a9f6e"/><path d="M9.4 0 L15 5.6 H10.4 Q9.4 5.6 9.4 4.6 Z" fill="#bfe3d0"/><path d="M4 9.6 H6 L7.5 12 L9 9.6 H11 L8.5 13.3 L11.1 17 H9.1 L7.5 14.6 L5.9 17 H3.9 L6.5 13.3 Z" fill="#fff"/></svg>
<svg style="left:1783px;top:397px;" width="15" height="19.4" viewBox="0 0 15 19.4"><path d="M1.2 0 H9.4 L15 5.6 V18.2 Q15 19.4 13.8 19.4 H1.2 Q0 19.4 0 18.2 V1.2 Q0 0 1.2 0 Z" fill="#e25766"/><path d="M9.4 0 L15 5.6 H10.4 Q9.4 5.6 9.4 4.6 Z" fill="#f6c3c8"/><text x="7.5" y="14.2" font-family="Liberation Sans" font-weight="700" font-size="6.6" fill="#fff" text-anchor="middle" textLength="12" lengthAdjust="spacingAndGlyphs">PDF</text></svg>
<div style="left:378.4px;top:432.4px;width:65.8px;height:30.4px;background:#f5f6fb;border:1px solid #e8eaf6;border-radius:5px;"></div>
<div style="left:416px;top:432.4px;width:28.19999999999999px;height:30.4px;background:#ebeefd;border-radius:0 5px 5px 0;"></div>
<svg style="left:425.8px;top:445px;" width="8" height="5.6" viewBox="0 0 8 5.6"><path d="M0 0 H8 L4.0 5.6 Z" fill="#4b50d8"/></svg>
<div style="left:447.4px;top:432.4px;width:31px;height:30.4px;background:#ebeefd;border-radius:5px;"></div>
<svg style="left:456.59999999999997px;top:441.6px;" width="12.6" height="13.4" viewBox="0 0 12.6 13.4"><path d="M0 0 H12.6 L7.7 6 V11.4 L5.3 13.4 V6 Z" fill="#4b50d8"/></svg>
<div style="left:492px;top:432.4px;width:82px;height:30.4px;background:#f5f6fb;border:1px solid #e8eaf6;border-radius:5px;"></div>
<div style="left:577px;top:432.4px;width:31px;height:30.4px;background:#ebeefd;border-radius:5px;"></div>
<svg style="left:586.2px;top:441.6px;" width="12.6" height="13.4" viewBox="0 0 12.6 13.4"><path d="M0 0 H12.6 L7.7 6 V11.4 L5.3 13.4 V6 Z" fill="#4b50d8"/></svg>
<div style="left:621px;top:432.4px;width:66px;height:30.4px;background:#f5f6fb;border:1px solid #e8eaf6;border-radius:5px;"></div>
<div style="left:659px;top:432.4px;width:28px;height:30.4px;background:#ebeefd;border-radius:0 5px 5px 0;"></div>
<svg style="left:668.6px;top:445px;" width="8" height="5.6" viewBox="0 0 8 5.6"><path d="M0 0 H8 L4.0 5.6 Z" fill="#4b50d8"/></svg>
<div style="left:690px;top:432.4px;width:31px;height:30.4px;background:#ebeefd;border-radius:5px;"></div>
<svg style="left:699.2px;top:441.6px;" width="12.6" height="13.4" viewBox="0 0 12.6 13.4"><path d="M0 0 H12.6 L7.7 6 V11.4 L5.3 13.4 V6 Z" fill="#4b50d8"/></svg>
<div style="left:734px;top:432.4px;width:66.4px;height:30.4px;background:#f5f6fb;border:1px solid #e8eaf6;border-radius:5px;"></div>
<div style="left:772px;top:432.4px;width:28.399999999999977px;height:30.4px;background:#ebeefd;border-radius:0 5px 5px 0;"></div>
<svg style="left:779px;top:440px;" width="14.4" height="15.4" viewBox="0 0 14.4 15.4"><rect x=".7" y="2" width="13" height="12.6" rx="1.4" fill="none" stroke="#4b50d8" stroke-width="1.3"/><path d="M.7 5.6 H13.7" stroke="#4b50d8" stroke-width="1.2"/><rect x="3.1" y="0" width="1.5" height="3.4" rx=".7" fill="#4b50d8"/><rect x="9.8" y="0" width="1.5" height="3.4" rx=".7" fill="#4b50d8"/><rect x="8.4" y="8.8" width="3.4" height="3.4" fill="#4b50d8"/></svg>
<div style="left:803.4px;top:432.4px;width:31px;height:30.4px;background:#ebeefd;border-radius:5px;"></div>
<svg style="left:812.6px;top:441.6px;" width="12.6" height="13.4" viewBox="0 0 12.6 13.4"><path d="M0 0 H12.6 L7.7 6 V11.4 L5.3 13.4 V6 Z" fill="#4b50d8"/></svg>
<div style="left:848px;top:432.4px;width:65px;height:30.4px;background:#f5f6fb;border:1px solid #e8eaf6;border-radius:5px;"></div>
<div style="left:886px;top:432.4px;width:27px;height:30.4px;background:#ebeefd;border-radius:0 5px 5px 0;"></div>
<svg style="left:896px;top:437px;" width="8" height="5.6" viewBox="0 0 8 5.6"><path d="M0 5.6 L4.0 0 L8 5.6 Z" fill="#4b50d8"/></svg>
<svg style="left:896px;top:451.8px;" width="8" height="5.6" viewBox="0 0 8 5.6"><path d="M0 0 H8 L4.0 5.6 Z" fill="#4b50d8"/></svg>
<div style="left:917px;top:432.4px;width:31px;height:30.4px;background:#ebeefd;border-radius:5px;"></div>
<svg style="left:926.2px;top:441.6px;" width="12.6" height="13.4" viewBox="0 0 12.6 13.4"><path d="M0 0 H12.6 L7.7 6 V11.4 L5.3 13.4 V6 Z" fill="#4b50d8"/></svg>
<div style="left:961px;top:432.4px;width:65px;height:30.4px;background:#f5f6fb;border:1px solid #e8eaf6;border-radius:5px;"></div>
<div style="left:999px;top:432.4px;width:27px;height:30.4px;background:#ebeefd;border-radius:0 5px 5px 0;"></div>
<svg style="left:1009px;top:437px;" width="8" height="5.6" viewBox="0 0 8 5.6"><path d="M0 5.6 L4.0 0 L8 5.6 Z" fill="#4b50d8"/></svg>
<svg style="left:1009px;top:451.8px;" width="8" height="5.6" viewBox="0 0 8 5.6"><path d="M0 0 H8 L4.0 5.6 Z" fill="#4b50d8"/></svg>
<div style="left:1030px;top:432.4px;width:31px;height:30.4px;background:#ebeefd;border-radius:5px;"></div>
<svg style="left:1039.2px;top:441.6px;" width="12.6" height="13.4" viewBox="0 0 12.6 13.4"><path d="M0 0 H12.6 L7.7 6 V11.4 L5.3 13.4 V6 Z" fill="#4b50d8"/></svg>
<div style="left:1074.4px;top:432.4px;width:65px;height:30.4px;background:#f5f6fb;border:1px solid #e8eaf6;border-radius:5px;"></div>
<div style="left:1112.4px;top:432.4px;width:27.0px;height:30.4px;background:#ebeefd;border-radius:0 5px 5px 0;"></div>
<svg style="left:1122.4px;top:437px;" width="8" height="5.6" viewBox="0 0 8 5.6"><path d="M0 5.6 L4.0 0 L8 5.6 Z" fill="#4b50d8"/></svg>
<svg style="left:1122.4px;top:451.8px;" width="8" height="5.6" viewBox="0 0 8 5.6"><path d="M0 0 H8 L4.0 5.6 Z" fill="#4b50d8"/></svg>
<div style="left:1143.4px;top:432.4px;width:31px;height:30.4px;background:#ebeefd;border-radius:5px;"></div>
<svg style="left:1152.6000000000001px;top:441.6px;" width="12.6" height="13.4" viewBox="0 0 12.6 13.4"><path d="M0 0 H12.6 L7.7 6 V11.4 L5.3 13.4 V6 Z" fill="#4b50d8"/></svg>
<div style="left:1187px;top:432.4px;width:70px;height:30.4px;background:#f5f6fb;border:1px solid #e8eaf6;border-radius:5px;"></div>
<div style="left:1260px;top:432.4px;width:31px;height:30.4px;background:#ebeefd;border-radius:5px;"></div>
<svg style="left:1269.2px;top:441.6px;" width="12.6" height="13.4" viewBox="0 0 12.6 13.4"><path d="M0 0 H12.6 L7.7 6 V11.4 L5.3 13.4 V6 Z" fill="#4b50d8"/></svg>
<div style="left:1304px;top:432.4px;width:69px;height:30.4px;background:#f5f6fb;border:1px solid #e8eaf6;border-radius:5px;"></div>
<div style="left:1376.4px;top:432.4px;width:31px;height:30.4px;background:#ebeefd;border-radius:5px;"></div>
<svg style="left:1385.6000000000001px;top:441.6px;" width="12.6" height="13.4" viewBox="0 0 12.6 13.4"><path d="M0 0 H12.6 L7.7 6 V11.4 L5.3 13.4 V6 Z" fill="#4b50d8"/></svg>
<div style="left:1421px;top:432.4px;width:64px;height:30.4px;background:#f5f6fb;border:1px solid #e8eaf6;border-radius:5px;"></div>
<div style="left:1488px;top:432.4px;width:31px;height:30.4px;background:#ebeefd;border-radius:5px;"></div>
<svg style="left:1497.2px;top:441.6px;" width="12.6" height="13.4" viewBox="0 0 12.6 13.4"><path d="M0 0 H12.6 L7.7 6 V11.4 L5.3 13.4 V6 Z" fill="#4b50d8"/></svg>
<div style="left:1532px;top:432.4px;width:70px;height:30.4px;background:#f5f6fb;border:1px solid #e8eaf6;border-radius:5px;"></div>
<div style="left:1605px;top:432.4px;width:31px;height:30.4px;background:#ebeefd;border-radius:5px;"></div>
<svg style="left:1614.2px;top:441.6px;" width="12.6" height="13.4" viewBox="0 0 12.6 13.4"><path d="M0 0 H12.6 L7.7 6 V11.4 L5.3 13.4 V6 Z" fill="#4b50d8"/></svg>
<div style="left:1649px;top:432.4px;width:64px;height:30.4px;background:#f5f6fb;border:1px solid #e8eaf6;border-radius:5px;"></div>
<div style="left:1717px;top:432.4px;width:31px;height:30.4px;background:#ebeefd;border-radius:5px;"></div>
<svg style="left:1726.2px;top:441.6px;" width="12.6" height="13.4" viewBox="0 0 12.6 13.4"><path d="M0 0 H12.6 L7.7 6 V11.4 L5.3 13.4 V6 Z" fill="#4b50d8"/></svg>
<div style="left:340px;top:470px;width:1523px;height:39.39999999999998px;background:#dadcf9;"></div>
<span style="left:378.6px;top:482.1px;font-size:13.5px;line-height:16px;color:#2e33c6;letter-spacing:-0.371px;">MM</span>
<span style="left:491.8px;top:482.1px;font-size:13.5px;line-height:16px;color:#3034c9;letter-spacing:0.175px;">Mm/1/mag-glow</span>
<span style="left:620.8px;top:482.1px;font-size:13.5px;line-height:16px;color:#777;letter-spacing:-0.182px;">Roboczy</span>
<span style="left:734.6px;top:482.1px;font-size:13.5px;line-height:16px;color:#2e33c6;letter-spacing:-0.237px;">17.01.2024</span>
<span style="left:848.6px;top:482.1px;font-size:13.5px;line-height:16px;color:#2e33c6;">1</span>
<span style="left:961.4px;top:482.1px;font-size:13.5px;line-height:16px;color:#2e33c6;letter-spacing:-0.369px;">1 000,00</span>
<span style="left:1075px;top:482.1px;font-size:13.5px;line-height:16px;color:#2e33c6;letter-spacing:-0.369px;">1 230,00</span>
<span style="left:1188px;top:482.1px;font-size:13.5px;line-height:16px;color:#2e33c6;">-</span>
<span style="left:1533px;top:482.1px;font-size:13.5px;line-height:16px;color:#2e33c6;">-</span>
<span style="left:1649.6px;top:482.1px;font-size:13.5px;line-height:16px;color:#2e33c6;letter-spacing:-0.004px;">glowny</span>
<div style="left:339.5px;top:470.4px;width:30.2px;height:30.6px;background:#bcbde1;border:4.4px solid #92d63f;border-radius:7px;box-shadow:1.5px 2px 4px rgba(0,0,0,.35);"></div>
<div style="left:344.4px;top:477px;width:18.6px;height:18.8px;background:#a2a5e2;border-radius:5px;"></div>
<div style="left:347px;top:480px;width:13px;height:13px;background:#2e33c6;border-radius:3px;"></div>
<svg style="left:349.6px;top:483.7px;" width="8" height="6.4" viewBox="0 0 8 6.4"><path d="M.9 3.2 L2.9 5 L6.9 .9" fill="none" stroke="#fff" stroke-width="1.6" stroke-linecap="round" stroke-linejoin="round"/></svg>
<div style="left:340px;top:562px;width:1523px;height:1px;background:#e3e4ea;"></div>
<span style="left:378.6px;top:528.1px;font-size:13.5px;line-height:16px;color:#222;letter-spacing:-0.248px;">PW</span>
<span style="left:491.8px;top:528.1px;font-size:13.5px;line-height:16px;color:#3034c9;letter-spacing:-0.009px;">PW/2/123456789</span>
<span style="left:620.8px;top:528.1px;font-size:13.5px;line-height:16px;color:#2f8a58;letter-spacing:0.043px;">Zatwierdzony</span>
<span style="left:734.6px;top:528.1px;font-size:13.5px;line-height:16px;color:#222;letter-spacing:-0.237px;">17.01.2024</span>
<span style="left:848.6px;top:528.1px;font-size:13.5px;line-height:16px;color:#222;">1</span>
<span style="left:961.4px;top:528.1px;font-size:13.5px;line-height:16px;color:#222;letter-spacing:-0.369px;">1 000,00</span>
<span style="left:1075px;top:528.1px;font-size:13.5px;line-height:16px;color:#222;letter-spacing:-0.369px;">1 230,00</span>
<span style="left:1188px;top:528.1px;font-size:13.5px;line-height:16px;color:#222;">-</span>
<span style="left:1533px;top:528.1px;font-size:13.5px;line-height:16px;color:#222;">-</span>
<span style="left:1649.6px;top:518.3px;font-size:13.5px;line-height:16px;color:#222;letter-spacing:0.133px;">testowy</span>
<span style="left:1649.6px;top:537.9px;font-size:13.5px;line-height:16px;color:#222;letter-spacing:-0.083px;">magazyn</span>
<div style="left:347px;top:526.2px;width:13px;height:13px;background:#fff;border:1px solid #7b7ee2;border-radius:3.5px;"></div>
<div style="left:340px;top:602px;width:1523px;height:1px;background:#e3e4ea;"></div>
<span style="left:378.6px;top:575.1px;font-size:13.5px;line-height:16px;color:#222;letter-spacing:-0.248px;">PW</span>
<span style="left:491.8px;top:575.1px;font-size:13.5px;line-height:16px;color:#3034c9;letter-spacing:0.109px;">PW/6/mag-glow</span>
<span style="left:620.8px;top:575.1px;font-size:13.5px;line-height:16px;color:#2f8a58;letter-spacing:0.043px;">Zatwierdzony</span>
<span style="left:734.6px;top:575.1px;font-size:13.5px;line-height:16px;color:#222;letter-spacing:-0.237px;">17.01.2024</span>
<span style="left:848.6px;top:575.1px;font-size:13.5px;line-height:16px;color:#222;">1</span>
<span style="left:961.4px;top:575.1px;font-size:13.5px;line-height:16px;color:#222;letter-spacing:-0.269px;">2 000,00</span>
<span style="left:1075px;top:575.1px;font-size:13.5px;line-height:16px;color:#222;letter-spacing:-0.269px;">2 460,00</span>
<span style="left:1188px;top:575.1px;font-size:13.5px;line-height:16px;color:#222;">-</span>
<span style="left:1533px;top:575.1px;font-size:13.5px;line-height:16px;color:#222;">-</span>
<span style="left:1649.6px;top:575.1px;font-size:13.5px;line-height:16px;color:#222;letter-spacing:-0.004px;">glowny</span>
<div style="left:347px;top:573.2px;width:13px;height:13px;background:#fff;border:1px solid #7b7ee2;border-radius:3.5px;"></div>
<div style="left:340px;top:674px;width:1523px;height:1px;background:#e3e4ea;"></div>
<span style="left:378.6px;top:630.9px;font-size:13.5px;line-height:16px;color:#222;letter-spacing:-0.925px;">PZ</span>
<span style="left:491.8px;top:630.9px;font-size:13.5px;line-height:16px;color:#3034c9;letter-spacing:0.036px;">PZ/9/mag-glow</span>
<span style="left:620.8px;top:630.9px;font-size:13.5px;line-height:16px;color:#2f8a58;letter-spacing:0.043px;">Zatwierdzony</span>
<span style="left:734.6px;top:630.9px;font-size:13.5px;line-height:16px;color:#222;letter-spacing:-0.136px;">13.11.2023</span>
<span style="left:848.6px;top:630.9px;font-size:13.5px;line-height:16px;color:#222;">1</span>
<span style="left:961.4px;top:630.9px;font-size:13.5px;line-height:16px;color:#222;letter-spacing:-0.215px;">615,00</span>
<span style="left:1075px;top:630.9px;font-size:13.5px;line-height:16px;color:#222;letter-spacing:-0.349px;">756,45</span>
<span style="left:1188px;top:630.9px;font-size:13.5px;line-height:16px;color:#222;">-</span>
<span style="left:1304.6px;top:611.4px;font-size:13.5px;line-height:16px;color:#222;letter-spacing:-0.517px;">POWIATOWY</span>
<span style="left:1304.6px;top:630.9px;font-size:13.5px;line-height:16px;color:#222;letter-spacing:-0.870px;">URZĄD PRACY W</span>
<span style="left:1304.6px;top:650.4px;font-size:13.5px;line-height:16px;color:#222;letter-spacing:-0.975px;">PRZEWORSKU</span>
<span style="left:1533px;top:630.9px;font-size:13.5px;line-height:16px;color:#222;">-</span>
<span style="left:1649.6px;top:630.9px;font-size:13.5px;line-height:16px;color:#222;letter-spacing:-0.004px;">glowny</span>
<div style="left:347px;top:629.0px;width:13px;height:13px;background:#fff;border:1px solid #7b7ee2;border-radius:3.5px;"></div>
<div style="left:340px;top:727px;width:1523px;height:1px;background:#e3e4ea;"></div>
<span style="left:378.6px;top:694.1px;font-size:13.5px;line-height:16px;color:#222;letter-spacing:-0.248px;">PW</span>
<span style="left:491.8px;top:694.1px;font-size:13.5px;line-height:16px;color:#3034c9;letter-spacing:-0.009px;">PW/4/123456789</span>
<span style="left:620.8px;top:694.1px;font-size:13.5px;line-height:16px;color:#2f8a58;letter-spacing:0.043px;">Zatwierdzony</span>
<span style="left:734.6px;top:694.1px;font-size:13.5px;line-height:16px;color:#222;letter-spacing:-0.237px;">17.01.2024</span>
<span style="left:848.6px;top:694.1px;font-size:13.5px;line-height:16px;color:#222;">1</span>
<span style="left:961.4px;top:694.1px;font-size:13.5px;line-height:16px;color:#222;letter-spacing:-0.369px;">1 000,00</span>
<span style="left:1075px;top:694.1px;font-size:13.5px;line-height:16px;color:#222;letter-spacing:-0.369px;">1 230,00</span>
<span style="left:1188px;top:694.1px;font-size:13.5px;line-height:16px;color:#222;">-</span>
<span style="left:1533px;top:694.1px;font-size:13.5px;line-height:16px;color:#222;">-</span>
<span style="left:1649.6px;top:684.3px;font-size:13.5px;line-height:16px;color:#222;letter-spacing:0.133px;">testowy</span>
<span style="left:1649.6px;top:703.9px;font-size:13.5px;line-height:16px;color:#222;letter-spacing:-0.083px;">magazyn</span>
<div style="left:347px;top:692.2px;width:13px;height:13px;background:#fff;border:1px solid #7b7ee2;border-radius:3.5px;"></div>
<div style="left:340px;top:767px;width:1523px;height:1px;background:#e3e4ea;"></div>
<span style="left:378.6px;top:740.3px;font-size:13.5px;line-height:16px;color:#222;letter-spacing:-0.925px;">PZ</span>
<span style="left:491.8px;top:740.3px;font-size:13.5px;line-height:16px;color:#3034c9;letter-spacing:-0.225px;">PZ/4/MG-II</span>
<span style="left:620.8px;top:740.3px;font-size:13.5px;line-height:16px;color:#2f8a58;letter-spacing:0.043px;">Zatwierdzony</span>
<span style="left:734.6px;top:740.3px;font-size:13.5px;line-height:16px;color:#222;letter-spacing:-0.237px;">18.07.2022</span>
<span style="left:848.6px;top:740.3px;font-size:13.5px;line-height:16px;color:#222;">0</span>
<span style="left:961.4px;top:740.3px;font-size:13.5px;line-height:16px;color:#222;letter-spacing:-0.319px;">0,00</span>
<span style="left:1075px;top:740.3px;font-size:13.5px;line-height:16px;color:#222;letter-spacing:-0.419px;">0,00</span>
<span style="left:1188px;top:740.3px;font-size:13.5px;line-height:16px;color:#222;">-</span>
<span style="left:1304.6px;top:740.3px;font-size:13.5px;line-height:16px;color:#222;letter-spacing:-0.031px;">Firma serwisowa</span>
<span style="left:1533px;top:740.3px;font-size:13.5px;line-height:16px;color:#222;">-</span>
<span style="left:1649.6px;top:740.3px;font-size:13.5px;line-height:16px;color:#222;letter-spacing:-0.253px;">Magazyn I</span>
<div style="left:347px;top:738.4px;width:13px;height:13px;background:#fff;border:1px solid #7b7ee2;border-radius:3.5px;"></div>
<div style="left:340px;top:840px;width:1523px;height:1px;background:#e3e4ea;"></div>
<span style="left:378.6px;top:796.3px;font-size:13.5px;line-height:16px;color:#222;letter-spacing:-0.925px;">PZ</span>
<span style="left:491.8px;top:796.3px;font-size:13.5px;line-height:16px;color:#3034c9;letter-spacing:-0.073px;">PZ/8/123</span>
<span style="left:620.8px;top:796.3px;font-size:13.5px;line-height:16px;color:#2f8a58;letter-spacing:0.043px;">Zatwierdzony</span>
<span style="left:734.6px;top:796.3px;font-size:13.5px;line-height:16px;color:#222;letter-spacing:-0.136px;">09.11.2023</span>
<span style="left:848.6px;top:796.3px;font-size:13.5px;line-height:16px;color:#222;">2</span>
<span style="left:961.4px;top:796.3px;font-size:13.5px;line-height:16px;color:#222;letter-spacing:-0.215px;">446,00</span>
<span style="left:1075px;top:796.3px;font-size:13.5px;line-height:16px;color:#222;letter-spacing:-0.282px;">548,58</span>
<span style="left:1188px;top:796.3px;font-size:13.5px;line-height:16px;color:#222;letter-spacing:-0.174px;">123 09.11.2023</span>
<span style="left:1304.6px;top:776.8px;font-size:13.5px;line-height:16px;color:#222;letter-spacing:-0.517px;">POWIATOWY</span>
<span style="left:1304.6px;top:796.3px;font-size:13.5px;line-height:16px;color:#222;letter-spacing:-0.870px;">URZĄD PRACY W</span>
<span style="left:1304.6px;top:815.8px;font-size:13.5px;line-height:16px;color:#222;letter-spacing:-0.975px;">PRZEWORSKU</span>
<span style="left:1533px;top:796.3px;font-size:13.5px;line-height:16px;color:#222;">-</span>
<span style="left:1649.6px;top:796.3px;font-size:13.5px;line-height:16px;color:#222;letter-spacing:-0.184px;">magazyn test1</span>
<div style="left:347px;top:794.4px;width:13px;height:13px;background:#fff;border:1px solid #7b7ee2;border-radius:3.5px;"></div>
<div style="left:340px;top:880px;width:1523px;height:1px;background:#e3e4ea;"></div>
<span style="left:378.6px;top:853.1px;font-size:13.5px;line-height:16px;color:#222;letter-spacing:-0.499px;">RW</span>
<span style="left:491.8px;top:853.1px;font-size:13.5px;line-height:16px;color:#3034c9;letter-spacing:0.071px;">RW/3/mag-glow</span>
<span style="left:620.8px;top:853.1px;font-size:13.5px;line-height:16px;color:#2f8a58;letter-spacing:0.043px;">Zatwierdzony</span>
<span style="left:734.6px;top:853.1px;font-size:13.5px;line-height:16px;color:#222;letter-spacing:-0.237px;">15.09.2023</span>
<span style="left:848.6px;top:853.1px;font-size:13.5px;line-height:16px;color:#222;">1</span>
<span style="left:961.4px;top:853.1px;font-size:13.5px;line-height:16px;color:#222;letter-spacing:-0.215px;">123,00</span>
<span style="left:1075px;top:853.1px;font-size:13.5px;line-height:16px;color:#222;letter-spacing:-0.282px;">151,29</span>
<span style="left:1188px;top:853.1px;font-size:13.5px;line-height:16px;color:#222;">-</span>
<span style="left:1421.2px;top:853.1px;font-size:13.5px;line-height:16px;color:#222;letter-spacing:-0.231px;">Jarek Gąsior</span>
<span style="left:1533px;top:853.1px;font-size:13.5px;line-height:16px;color:#222;">-</span>
<span style="left:1649.6px;top:853.1px;font-size:13.5px;line-height:16px;color:#222;letter-spacing:-0.004px;">glowny</span>
<div style="left:347px;top:851.2px;width:13px;height:13px;background:#fff;border:1px solid #7b7ee2;border-radius:3.5px;"></div>
<div style="left:340px;top:920px;width:1523px;height:1px;background:#e3e4ea;"></div>
<span style="left:378.6px;top:893.1px;font-size:13.5px;line-height:16px;color:#222;letter-spacing:-0.925px;">PZ</span>
<span style="left:491.8px;top:893.1px;font-size:13.5px;line-height:16px;color:#3034c9;letter-spacing:-0.225px;">PZ/2/MG-II</span>
<span style="left:620.8px;top:893.1px;font-size:13.5px;line-height:16px;color:#777;letter-spacing:-0.182px;">Roboczy</span>
<span style="left:734.6px;top:893.1px;font-size:13.5px;line-height:16px;color:#222;letter-spacing:-0.237px;">14.07.2022</span>
<span style="left:848.6px;top:893.1px;font-size:13.5px;line-height:16px;color:#222;">1</span>
<span style="left:961.4px;top:893.1px;font-size:13.5px;line-height:16px;color:#222;letter-spacing:-0.282px;">813,01</span>
<span style="left:1075px;top:893.1px;font-size:13.5px;line-height:16px;color:#222;letter-spacing:-0.369px;">1 000,00</span>
<span style="left:1188px;top:893.1px;font-size:13.5px;line-height:16px;color:#222;">-</span>
<span style="left:1304.6px;top:893.1px;font-size:13.5px;line-height:16px;color:#222;letter-spacing:-0.031px;">Firma serwisowa</span>
<span style="left:1533px;top:893.1px;font-size:13.5px;line-height:16px;color:#222;">-</span>
<span style="left:1649.6px;top:893.1px;font-size:13.5px;line-height:16px;color:#222;letter-spacing:-0.253px;">Magazyn I</span>
<div style="left:347px;top:891.2px;width:13px;height:13px;background:#fff;border:1px solid #7b7ee2;border-radius:3.5px;"></div>
<div style="left:1903px;top:0px;width:17px;height:919px;background:#f1f1f1;"></div>
<div style="left:1905px;top:17px;width:13px;height:526px;background:#c1c1c1;"></div>
<svg style="left:1908px;top:7px;" width="7" height="4" viewBox="0 0 7 4"><path d="M0 4 L3.5 0 L7 4 Z" fill="#a3a3a3"/></svg>
<svg style="left:1908px;top:908px;" width="7" height="4" viewBox="0 0 7 4"><path d="M0 0 H7 L3.5 4 Z" fill="#505050"/></svg>
</body></html>
